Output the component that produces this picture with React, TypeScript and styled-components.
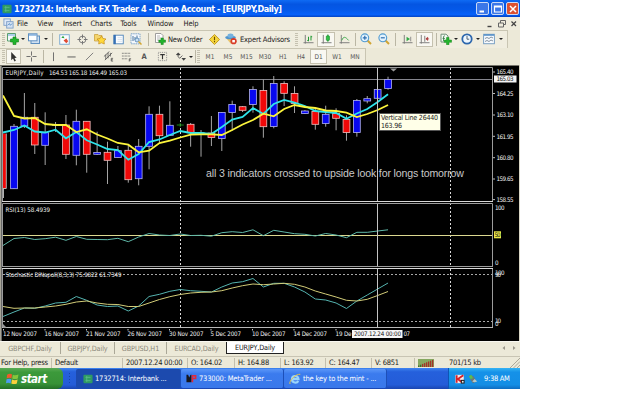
import React from "react";
import styled, { createGlobalStyle } from "styled-components";

type Point = [number, number];

// color, open/close box top, box bottom, wick top, wick bottom
type Candle = ["r" | "b" | "w" | "g", number, number, number, number];

const candles: Candle[] = [
  ["b", 126.3, 188.7, 124, 189],
  ["b", 117.3, 126, 93, 128],
  ["r", 117.3, 145, 103, 154],
  ["b", 132.7, 145.3, 112.3, 165],
  ["w", 125, 125, 122, 132],
  ["r", 125, 154.3, 115, 159],
  ["b", 121.3, 155.3, 109.7, 165.3],
  ["r", 121.3, 154.3, 121, 172.7],
  ["b", 152.5, 154.3, 131.7, 155],
  ["r", 152.3, 160.3, 141.7, 184],
  ["b", 150.7, 157.5, 146, 158],
  ["r", 150.3, 179.7, 144.7, 182.7],
  ["b", 146.3, 178.7, 139, 185.3],
  ["b", 114.3, 146.3, 106.3, 169.3],
  ["r", 114.3, 135.7, 105.7, 144],
  ["b", 125.3, 135.3, 101.3, 136],
  ["g", 125, 125, 123, 127],
  ["r", 124.3, 132.7, 123, 146.7],
  ["w", 133, 133, 130, 156.7],
  ["r", 133, 137.5, 116, 146],
  ["b", 112.5, 138.5, 112, 151],
  ["b", 104.5, 112.5, 100.7, 130.7],
  ["r", 106.7, 110.3, 106, 112],
  ["b", 89.5, 104.5, 86.3, 112.7],
  ["r", 90.5, 126.7, 79.7, 137.7],
  ["b", 83.5, 126.5, 76, 128.3],
  ["r", 83.5, 93.3, 81.3, 106],
  ["r", 93.5, 103.5, 86.3, 113],
  ["b", 111, 113.5, 110, 114],
  ["r", 111.5, 124.3, 109, 129.7],
  ["b", 114.3, 123.5, 105.7, 126.7],
  ["r", 113.5, 118.3, 108.3, 130.3],
  ["r", 119.5, 132.5, 115.3, 140.7],
  ["b", 100.5, 132.5, 99, 136.7],
  ["b", 98.7, 101, 96, 103.3],
  ["b", 89.5, 98.3, 89, 99],
  ["b", 79.5, 88.5, 76.7, 89.7],
];

const candleX = (i: number) => 14 + i * 10.39;
const fills = { r: "#f00808", b: "#0808f0", w: "#fff", g: "#1a8a1a" };

// one value per bar, the first sits on the left border
const series = (values: number[]): Point[] =>
  values.map((y, i) => [i === 0 ? 3 : candleX(i - 1), y]);

const slowAverage = series([
  95.5, 116, 118.5, 118, 124, 125, 125, 132, 129.3, 134.5, 138.5, 143, 144.7, 152.3,
  150.7, 143, 140.7, 137.5, 134.7, 134.3, 134.3, 135, 130, 124.5, 120, 113.7, 116.3,
  109, 105, 107, 108, 110.5, 111, 112.7, 117, 114, 110, 105,
]);
const fastAverage = series([
  132.5, 130, 125.5, 131.5, 132.5, 129.7, 138.3, 132, 140.3, 144.5, 149, 150, 159.7,
  154, 142, 139.5, 135, 131, 133, 133, 134, 127, 119.5, 117, 108, 114, 104, 100,
  102.7, 106, 111, 112, 113, 118.7, 113.5, 109, 102, 94.3,
]);
const rsi = series([
  245.5, 238.5, 237.5, 239.5, 238.7, 237.2, 240.3, 236.5, 239.3, 239.5, 239.7, 238.3,
  241.7, 237, 233.5, 235, 235.5, 234, 235.5, 235.3, 236.2, 232.7, 231.7, 232.5, 229.8,
  235.7, 230.3, 232, 233.7, 234.3, 236, 233.5, 235, 237.7, 232.3, 232.3, 231, 229.8,
]);
const stochMain = series([
  316.5, 312, 308, 308.3, 306, 303, 302.3, 296.5, 300.3, 305, 306.5, 306, 311, 306,
  296.5, 294.3, 291.3, 289.5, 290.7, 291.3, 292, 287, 283, 281.7, 278.5, 287, 283.3,
  283.3, 287, 292, 299, 300, 303, 308.5, 301, 295, 289, 283,
]);
const stochSignal = series([
  306.5, 308.3, 308, 308, 307, 306, 304.3, 302, 301, 303, 304.3, 304.5, 306.5, 306.5,
  303, 299.5, 296.7, 294.5, 293, 292.3, 292, 290.7, 288, 285.7, 284, 284.7, 284,
  283.3, 284.3, 287, 291, 294, 297, 300.3, 301, 299.3, 295.5, 291.5,
]);

const toPoints = (pts: Point[]) => pts.map((p) => p.join(",")).join(" ");

const priceLabels: [string, number][] = [
  ["165.40", 72],
  ["164.25", 93.5],
  ["163.10", 115],
  ["161.95", 136.3],
  ["160.80", 157.7],
  ["159.65", 179],
  ["158.55", 199.6],
];

const dateLabels: [string, number, number][] = [
  ["12 Nov 2007", 3, 34],
  ["16 Nov 2007", 44.5, 34.5],
  ["21 Nov 2007", 86, 34.5],
  ["26 Nov 2007", 127.5, 34.5],
  ["30 Nov 2007", 169, 34.5],
  ["5 Dec 2007", 210.5, 30.5],
  ["10 Dec 2007", 252, 33.5],
  ["14 Dec 2007", 293.5, 33.5],
  ["19 De", 335.5, 16],
];

const tabs: [string, number, boolean][] = [
  ["GBPCHF,Daily", 61, false],
  ["GBPJPY,Daily", 54, false],
  ["GBPUSD,H1", 52, false],
  ["EURCAD,Daily", 59, false],
  ["EURJPY,Daily", 58, true],
];

const statusCells: [string, number][] = [
  ["For Help, press", 52],
  ["Default", 71],
  ["2007.12.24 00:00", 65],
  ["O: 164.02", 47],
  ["H: 164.88", 46],
  ["L: 163.92", 45],
  ["C: 164.47", 46],
  ["V: 6851", 43],
];

const periods: [string, number][] = [
  ["M1", 18],
  ["M5", 18],
  ["M15", 19],
  ["M30", 18],
  ["H1", 18],
  ["H4", 18],
  ["D1", 17],
  ["W1", 20],
  ["MN", 16],
];

const menuItems: [string, number][] = [
  ["File", 20.5],
  ["View", 25.5],
  ["Insert", 27.5],
  ["Charts", 30],
  ["Tools", 27],
  ["Window", 36],
  ["Help", 30],
];

function PriceChart() {
  return (
    <Plot height={136} viewBox="2 66 516 136">
      <line x1="450.5" x2="450.5" y1="68" y2="202" className="dash" />
      <line x1="180.5" x2="180.5" y1="68" y2="202" className="dash" />
      <line x1="3" x2="493" y1="79.5" y2="79.5" stroke="#85858d" />
      <rect x="3" y="133.5" width="3" height="55" fill="#f00808" />
      <path d="M3 188.5H6.3V133.5M3.5 189V198" className="wick" />
      {candles.map(([kind, top, bottom, high, low], i) => {
        const x = candleX(i);
        return (
          <g key={i}>
            <line
              x1={x}
              x2={x}
              y1={high}
              y2={low}
              stroke={kind === "g" ? fills.g : "#b8b8b8"}
              strokeWidth=".9"
            />
            {top === bottom ? (
              <line x1={x - 3.5} x2={x + 3.5} y1={top} y2={top} stroke={fills[kind]} />
            ) : (
              <rect
                x={x - 3.4}
                y={top}
                width="6.8"
                height={bottom - top}
                fill={fills[kind]}
                stroke={kind === "r" ? "#f0c0c0" : "#b4b4f0"}
                strokeWidth=".8"
              />
            )}
          </g>
        );
      })}
      <polyline points={toPoints(fastAverage)} stroke="#2fe3ea" strokeWidth="1.8" fill="none" />
      <polyline points={toPoints(slowAverage)} stroke="#fbf43c" strokeWidth="1.8" fill="none" />
      <line x1="377.5" x2="377.5" y1="68" y2="202" stroke="#c4c4c4" />
      <path d="M390 68.5H397L393.5 71.5Z" fill="#9a9a9a" />
      <path d="M2.5 202V67.5H492.5V202" className="frame" />
      <line x1="2" x2="493" y1="201.5" y2="201.5" stroke="#d8d8d8" />
      <text x="5.5" y="75.3" textLength="38" className="small">EURJPY,Daily</text>
      <text x="49" y="75.3" textLength="78" className="small">164.53 165.18 164.49 165.03</text>
      <text x="206" y="176.6" textLength="258" className="note">
        all 3 indicators crossed to upside look for longs tomorrow
      </text>
      {priceLabels.map(([label, y]) => (
        <g key={label}>
          <line x1="493" x2="495" y1={y} y2={y} stroke="#bbb" />
          <text x="496.5" y={y + 2.4} textLength="17" className="small">{label}</text>
        </g>
      ))}
      <rect x="494" y="75.5" width="22.5" height="7" fill="#f4f4f4" />
      <text x="496.5" y="81.4" textLength="17" className="small inverse">165.03</text>
    </Plot>
  );
}

function RsiChart() {
  return (
    <Plot height={65} viewBox="2 202 516 65">
      <line x1="450.5" x2="450.5" y1="203" y2="267" className="dash" />
      <line x1="180.5" x2="180.5" y1="203" y2="267" className="dash" />
      <line x1="3" x2="493" y1="235.5" y2="235.5" stroke="#dcd890" />
      <polyline points={toPoints(rsi)} stroke="#5fb8a8" strokeWidth="1" fill="none" />
      <line x1="377.5" x2="377.5" y1="203" y2="267" stroke="#c4c4c4" />
      <path d="M2.5 267V203.5H492.5V267" className="frame" />
      <line x1="2" x2="493" y1="266.5" y2="266.5" stroke="#9c9c9c" />
      <text x="5.5" y="211.6" textLength="44.5" className="small">RSI(13) 58.4939</text>
      <text x="495" y="210" textLength="9.5" className="small">100</text>
      <rect x="494" y="231.3" width="7" height="7" fill="#ece84a" />
      <text x="494.5" y="237.2" textLength="6" className="small inverse">50</text>
      <text x="495" y="265" className="small">0</text>
    </Plot>
  );
}

function StochasticChart() {
  return (
    <Plot height={62} viewBox="2 267 516 62">
      <line x1="450.5" x2="450.5" y1="269" y2="328" className="dash" />
      <line x1="180.5" x2="180.5" y1="269" y2="328" className="dash" />
      <line x1="3" x2="493" y1="274.5" y2="274.5" className="level" />
      <line x1="3" x2="493" y1="321.5" y2="321.5" className="level" />
      <polyline points={toPoints(stochMain)} stroke="#55b4b0" strokeWidth="1" fill="none" />
      <polyline points={toPoints(stochSignal)} stroke="#d2cc78" strokeWidth="1" fill="none" />
      <line x1="377.5" x2="377.5" y1="268" y2="328" stroke="#c4c4c4" />
      <path d="M2.5 328V268.5H492.5V328" className="frame" />
      <line x1="2" x2="493" y1="268.5" y2="268.5" stroke="#d8d8d8" />
      <line x1="2" x2="493" y1="327.5" y2="327.5" stroke="#b8b8b8" />
      <path d="M3 324L7 328H3Z" fill="#999" />
      <text x="5.5" y="277" textLength="116" className="small">
        Stochastic DiNapoli(8,3,3) 75.9822 61.7349
      </text>
      <text x="495" y="275.3" textLength="9.5" className="small">100</text>
      <text x="495" y="277" textLength="6" className="small">90</text>
      <text x="495" y="323.4" textLength="6" className="small">10</text>
      <text x="495" y="326" className="small">0</text>
    </Plot>
  );
}

function TimeAxis() {
  return (
    <Plot height={11} viewBox="2 329 516 11">
      {dateLabels.map(([label, x, width]) => (
        <g key={label}>
          <line x1={x + 0.5} x2={x + 0.5} y1="328" y2="330.5" stroke="#ccc" />
          <text x={x} y="336.4" textLength={width} className="small">{label}</text>
        </g>
      ))}
      <rect x="352" y="330" width="50.5" height="8" fill="#f6f6f6" />
      <text x="354" y="336.4" textLength="47" className="small inverse">2007.12.24 00:00</text>
      <text x="403.5" y="336.4" textLength="6.5" className="small">07</text>
    </Plot>
  );
}

const glyphs: Record<string, React.ReactNode> = {
  app: (
    <>
      <rect x=".5" y="1" width="11" height="10" rx="1" fill="#2f9a63" />
      <path d="M3 4H9M3 8H9M4.5 2.5V9.5" stroke="#5cbd88" fill="none" />
    </>
  ),
  charts: (
    <>
      <rect x="1" y="1" width="7" height="7" fill="#dfeaf8" stroke="#7fa0c8" />
      <rect x="4" y="4" width="7" height="7" fill="#d4e2f4" stroke="#7fa0c8" />
      <path d="M5 8L7 6L8 8L10 6" stroke="#5a92c8" fill="none" />
    </>
  ),
  newChart: (
    <>
      <path d="M.5 .5H8.5V8H.5Z" fill="#f4f8fc" stroke="#5aa070" />
      <path d="M1 2H8" stroke="#6aa3d8" />
      <path d="M6 4H9V6H11.5V9H9V11.5H6V9H3.5V6H6Z" fill="#23b52d" stroke="#128218" strokeWidth=".6" />
    </>
  ),
  profiles: (
    <>
      <rect x="3" y="3" width="8.5" height="7.5" fill="#cfe0f2" stroke="#5e8fc0" />
      <rect x=".5" y=".8" width="8.5" height="7" fill="#fdfeff" stroke="#5e8fc0" />
      <path d="M1 2H8.5" stroke="#4b8bd0" />
    </>
  ),
  watch: (
    <>
      <rect x=".8" y=".8" width="10.4" height="10.4" fill="#fafcff" stroke="#76a8cf" />
      <path d="M2.5 4L4.5 2L6 4.5Z" fill="#2aa43a" />
      <path d="M5 7L8 5L10 8L8 10Z" fill="#e04a32" />
    </>
  ),
  crosshair: (
    <>
      <circle cx="6" cy="6" r="3.7" fill="none" stroke="#777" />
      <path d="M6 .5V4.5M6 7.5V11.5M.5 6H4.5M7.5 6H11.5" stroke="#777" strokeWidth="1.1" />
    </>
  ),
  folder: (
    <>
      <path d="M.5 1.5H4L5 2.5H8V8H.5Z" fill="#f4d56e" stroke="#c79b32" strokeWidth=".7" />
      <path d="M7.5 3L9 5.5L12 6L10 8L10.3 11L7.5 9.8L4.7 11L5 8L3 6L6 5.5Z" fill="#ffd83a" stroke="#c48d1c" strokeWidth=".7" />
    </>
  ),
  terminal: (
    <>
      <rect x=".8" y="1.3" width="10.4" height="9.4" fill="#fbfdff" stroke="#5286ba" />
      <path d="M2 1V11" stroke="#3670b4" strokeWidth="2.2" />
      <path d="M5 4H10M5 6H10M5 8H10" stroke="#c2d2e2" strokeWidth=".6" />
    </>
  ),
  tester: (
    <>
      <rect x="1" y=".8" width="9" height="10" fill="#f3f7fc" stroke="#7ca4ca" strokeDasharray="1.5 .7" />
      <path d="M3 3V8M5 4V7M7 2.5V6" stroke="#4b77a0" />
      <circle cx="7" cy="7" r="2" fill="#c7e0f4" stroke="#4b7fae" strokeWidth=".8" />
      <path d="M8.5 8.5L11.5 11.5" stroke="#d3a630" strokeWidth="1.5" />
    </>
  ),
  order: (
    <>
      <path d="M1.5 .5H7L9 2.5V9.5H1.5Z" fill="#fff" stroke="#888" strokeWidth=".8" />
      <path d="M3 3H6M3 5H7M3 7H5" stroke="#999" strokeWidth=".7" />
      <path d="M7 5H9.3V7H11.5V9.3H9.3V11.5H7V9.3H4.8V7H7Z" fill="#22b32c" stroke="#128218" strokeWidth=".5" />
    </>
  ),
  warning: (
    <>
      <path d="M6 .5L11.5 6L6 11.5L.5 6Z" fill="#f5d63c" stroke="#c09518" />
      <path d="M6 3V6.7M6 7.7V9" stroke="#704d00" strokeWidth="1.2" />
    </>
  ),
  expert: (
    <>
      <path d="M1 5L6 11L10 6Z" fill="#e9c36c" />
      <ellipse cx="5.5" cy="4.5" rx="5.3" ry="1.8" fill="#4f94cc" />
      <ellipse cx="5.5" cy="2.7" rx="3" ry="2.1" fill="#74b1df" />
      <circle cx="8.6" cy="8.2" r="3.1" fill="#d83c28" />
      <rect x="7.3" y="7" width="2.6" height="2.4" fill="#fff" />
    </>
  ),
  bars: (
    <>
      <path d="M2.5 1V10.5M.5 9.5H11.5" stroke="#777" />
      <path d="M6 3V8M4.7 7H6M8.7 2V7M8.7 3H10" stroke="#249a35" strokeWidth="1.1" />
    </>
  ),
  candles: (
    <>
      <path d="M2.5 1V10.5M.5 9.5H11.5" stroke="#777" />
      <path d="M7.5 .5V8.5" stroke="#138a25" />
      <rect x="5.8" y="2" width="3.4" height="5" rx=".8" fill="#32c247" stroke="#138a25" strokeWidth=".7" />
    </>
  ),
  curve: (
    <>
      <path d="M2.5 1V10.5M.5 9.5H11.5" stroke="#777" />
      <path d="M3 7C5 2 7 3 10.5 7" stroke="#36a545" fill="none" />
    </>
  ),
  zoomIn: (
    <>
      <path d="M7 7L11 11" stroke="#d1a534" strokeWidth="2" />
      <circle cx="4.8" cy="4.8" r="3.9" fill="#e3f2fd" stroke="#4f9ad1" strokeWidth="1.1" />
      <path d="M4.8 2.8V6.8M2.8 4.8H6.8" stroke="#2f6fb0" strokeWidth="1.2" />
    </>
  ),
  zoomOut: (
    <>
      <path d="M7 7L11 11" stroke="#d1a534" strokeWidth="2" />
      <circle cx="4.8" cy="4.8" r="3.9" fill="#e3f2fd" stroke="#4f9ad1" strokeWidth="1.1" />
      <path d="M2.8 4.8H6.8" stroke="#2f6fb0" strokeWidth="1.2" />
    </>
  ),
  scroll: (
    <>
      <path d="M2.5 1V10.5M.5 9.5H11.5" stroke="#777" />
      <path d="M5 3L8.7 5.5L5 8Z" fill="#2fa843" />
      <path d="M9.5 3V8" stroke="#888" />
    </>
  ),
  shift: (
    <>
      <path d="M2.5 1V10.5M.5 9.5H11.5M6.3 2V8.5" stroke="#777" />
      <path d="M11 5.3H8M9.5 3.5L7.5 5.3L9.5 7Z" fill="#a33" stroke="#a33" strokeWidth=".7" />
    </>
  ),
  indicators: (
    <>
      <path d="M1 1.2H6L8 3V9H1Z" fill="#f4faf4" stroke="#71917a" />
      <path d="M3.5 8V4C3.5 3 4 2.8 5 3M2.5 5.4H5" stroke="#337542" fill="none" strokeWidth=".8" />
      <path d="M6.5 4.5H9V7H11.5V9.3H9V11.7H6.5V9.3H4.2V7H6.5Z" fill="#24b42e" stroke="#158a1c" strokeWidth=".5" />
    </>
  ),
  clock: (
    <>
      <circle cx="6" cy="6" r="4.7" fill="#eef7ff" stroke="#2d67ad" strokeWidth="1.8" />
      <path d="M6 3V6.2H8.2" stroke="#456" fill="none" strokeWidth=".9" />
    </>
  ),
  template: (
    <>
      <rect x=".6" y="1.3" width="10.8" height="9.4" fill="#f8fbff" stroke="#7ba0c4" />
      <path d="M1 2H11" stroke="#4f8dc7" strokeWidth="1.5" />
      <path d="M2 5.5L4 4.5L6 5.5L8 4L10 5M2 8.5L4 7.5L6 8.5L8 7L10 8" stroke="#678" fill="none" strokeWidth=".8" />
    </>
  ),
  cursor: <path d="M3.5 1V10L5.5 8.2L7 11.5L8.6 10.7L7.1 7.6L9.5 7.3Z" fill="#333" />,
  cross: <path d="M6 .5V5M6 7V11.5M.5 6H5M7 6H11.5" stroke="#666" />,
  vline: <path d="M6 1.5V11" stroke="#666" />,
  hline: <path d="M1.5 6.5H10.5" stroke="#555" />,
  trend: <path d="M2 10L10 2" stroke="#777" />,
  channel: (
    <>
      <path d="M1 6L7 .5M2 10L10 2M3 4V9M5.5 2V8M8 2V6" stroke="#555" strokeWidth=".9" />
      <path d="M11 8H9V11H11M9 9.5H10.7" stroke="#444" fill="none" strokeWidth=".8" />
    </>
  ),
  fibo: (
    <>
      <path d="M1 2.5H10.5M1 5.5H10.5M1 8.5H7" stroke="#666" strokeDasharray="1 .6" />
      <path d="M9 11.5V8.5H11M9 10H10.6" stroke="#444" fill="none" strokeWidth=".8" />
    </>
  ),
  label: (
    <>
      <rect x="1.5" y="1.5" width="9" height="9" fill="none" stroke="#888" strokeDasharray="1 1" />
      <path d="M3.5 4H8.5M6 4V9" stroke="#333" strokeWidth="1.2" />
    </>
  ),
  arrows: (
    <>
      <path d="M1 4.2L3.5 1.5L6 4.2L3.5 5.2Z" fill="#444" />
      <path d="M3 5.5L5 8L8 5" stroke="#555" fill="none" />
      <path d="M7 7.5H12L9.5 10.7Z" fill="#444" />
    </>
  ),
  flag: (
    <>
      <path d="M1 2.5Q3.5 1 5.6 2.3L5 6Q3 4.8 .6 6Z" fill="#ef5a2c" />
      <path d="M6.3 2.5Q8.5 3.6 11.5 2.3L10.9 6Q8.2 7 5.7 6Z" fill="#86c53c" />
      <path d="M.5 6.8Q3 5.6 4.9 6.8L4.3 10.5Q2 9.3 0 10.4Z" fill="#4d9cf0" />
      <path d="M5.5 7Q8 8 10.7 7L10 10.6Q7.5 11.6 4.9 10.6Z" fill="#fbd03c" />
    </>
  ),
  explorer: (
    <>
      <path d="M9.3 8C8 10.4 3 10.2 3 6.2C3 2.2 9.5 2 9.5 6.2H4" stroke="#9bd4fb" strokeWidth="2.2" fill="none" />
      <path d="M1 11C-.5 8 7 .5 11.3 1.3" stroke="#e5c345" fill="none" />
    </>
  ),
  meta: (
    <>
      <path d="M.5 10V2H2.3L3.5 5L5 2H6V10" fill="#16161c" />
      <path d="M7 10V3H10.5V6H7" stroke="#e0293a" strokeWidth="1.7" fill="none" />
    </>
  ),
  antivirus: (
    <>
      <rect x=".5" y="1" width="10" height="10" fill="#f5eaea" />
      <path d="M2 1.5V10.5M10 1.5L3.5 6L9 10.5" stroke="#d81f26" strokeWidth="2.2" fill="none" />
      <rect x="7" y="7" width="4.5" height="4.5" fill="#222" />
      <rect x="8.3" y="8.3" width="2" height="2" fill="#eee" />
    </>
  ),
  safelyRemove: (
    <>
      <path d="M2 1L7 3L10 9L6 11L3 7Z" fill="#6d7778" />
      <path d="M1 3L4 1L6 5L3 6Z" fill="#57c14e" />
      <path d="M5 9L8 6L11 9L8 10Z" fill="#b7c7c6" />
    </>
  ),
};

function Icon({ name, size = 12 }: { name: string; size?: number }) {
  return (
    <IconSvg width={size} height={size} viewBox="0 0 12 12">
      {glyphs[name]}
    </IconSvg>
  );
}

function App() {
  return (
    <Desktop>
      <GlobalStyle />
      <Screen>
        <TitleBar>
          <Icon name="app" size={10} />
          <Title>1732714: Interbank FX Trader 4 - Demo Account - [EURJPY,Daily]</Title>
          <WindowButton>
            <svg width="12" height="12"><path d="M2.5 8.5H7" stroke="#fff" strokeWidth="2" /></svg>
          </WindowButton>
          <WindowButton>
            <svg width="12" height="12"><path d="M2.5 3H9.5V9H2.5ZM2.5 4H9.5" stroke="#fff" strokeWidth="1.2" fill="none" /></svg>
          </WindowButton>
          <WindowButton $close>
            <svg width="12" height="12"><path d="M3 3L9 9M9 3L3 9" stroke="#fff" strokeWidth="1.5" /></svg>
          </WindowButton>
        </TitleBar>

        <MenuBar>
          <Icon name="charts" size={11} />
          <MenuList>
            {menuItems.map(([label, width]) => (
              <MenuItem key={label} $w={width}>{label}</MenuItem>
            ))}
          </MenuList>
          <ChildControls>
            <svg width="10" height="10"><path d="M2.5 7.5H6.5" stroke="#444" strokeWidth="1.4" /></svg>
            <svg width="10" height="10"><path d="M3.5 1.5H8.5V5.5H7M1.5 4H6.5V8H1.5ZM3.5 1.5V4" stroke="#666" fill="none" /></svg>
            <svg width="10" height="10"><path d="M2.5 2.5L7 7M7 2.5L2.5 7" stroke="#444" strokeWidth="1.2" /></svg>
          </ChildControls>
        </MenuBar>

        <Toolbar $w={508}>
          <Handle />
          <Tool $w={14}><Icon name="newChart" /></Tool>
          <Tool $w={5}><Caret /></Tool>
          <Tool $w={18}><Icon name="profiles" /></Tool>
          <Tool $w={5}><Caret /></Tool>
          <Divider $w={8} />
          <Tool $w={17}><Icon name="watch" size={11} /></Tool>
          <Tool $w={18}><Icon name="crosshair" size={11} /></Tool>
          <Tool $w={18}><Icon name="folder" /></Tool>
          <Tool $w={18}><Icon name="terminal" size={11} /></Tool>
          <Tool $w={18}><Icon name="tester" /></Tool>
          <Divider $w={7} />
          <Tool $w={16}><Icon name="order" /></Tool>
          <ToolLabel $w={39}>New Order</ToolLabel>
          <Tool $w={14}><Icon name="warning" size={11} /></Tool>
          <Tool $w={19}><Icon name="expert" /></Tool>
          <ToolLabel $w={55}>Expert Advisors</ToolLabel>
          <Handle />
          <Tool $w={18}><Icon name="bars" size={11} /></Tool>
          <Tool $w={18} $pressed><Icon name="candles" size={11} /></Tool>
          <Tool $w={18}><Icon name="curve" size={11} /></Tool>
          <Divider $w={4} />
          <Tool $w={18}><Icon name="zoomIn" /></Tool>
          <Tool $w={18}><Icon name="zoomOut" /></Tool>
          <Divider $w={5} />
          <Tool $w={18}><Icon name="scroll" size={11} /></Tool>
          <Tool $w={17} $pressed><Icon name="shift" size={11} /></Tool>
          <Divider $w={6} />
          <Tool $w={14}><Icon name="indicators" /></Tool>
          <Tool $w={5}><Caret /></Tool>
          <Tool $w={17}><Icon name="clock" /></Tool>
          <Tool $w={5}><Caret /></Tool>
          <Tool $w={18}><Icon name="template" /></Tool>
          <Tool $w={5}><Caret /></Tool>
        </Toolbar>

        <Toolbar $w={366}>
          <Handle />
          <Tool $w={15} $pressed><Icon name="cursor" size={11} /></Tool>
          <Tool $w={20}><Icon name="cross" size={11} /></Tool>
          <Divider $w={4} />
          <Tool $w={17}><Icon name="vline" size={11} /></Tool>
          <Tool $w={18}><Icon name="hline" size={11} /></Tool>
          <Tool $w={19}><Icon name="trend" size={11} /></Tool>
          <Tool $w={18}><Icon name="channel" size={11} /></Tool>
          <Tool $w={18}><Icon name="fibo" size={11} /></Tool>
          <Tool $w={18}><LetterTool>A</LetterTool></Tool>
          <Tool $w={18}><Icon name="label" size={11} /></Tool>
          <Tool $w={18}><Icon name="arrows" size={11} /></Tool>
          <Tool $w={4}><Caret /></Tool>
          <Divider $w={4} />
          <Handle />
          {periods.map(([label, width]) => (
            <Period key={label} $w={width} $pressed={label === "D1"}>{label}</Period>
          ))}
        </Toolbar>

        <ChartWindow>
          <PriceChart />
          <RsiChart />
          <StochasticChart />
          <TimeAxis />
          <Tooltip>
            <span>Vertical Line 26440</span>
            <span>163.96</span>
          </Tooltip>
        </ChartWindow>

        <TabBar>
          {tabs.map(([label, width, active]) => (
            <Tab key={label} $w={width} $active={active}>{label}</Tab>
          ))}
          <TabScroll>
            <svg width="5" height="6"><path d="M4 1V5L1.5 3Z" fill="#99968a" /></svg>
            <svg width="5" height="6"><path d="M1 1V5L3.5 3Z" fill="#99968a" /></svg>
          </TabScroll>
        </TabBar>

        <StatusBar>
          {statusCells.map(([label, width]) => (
            <StatusCell key={label} $w={width}>{label}</StatusCell>
          ))}
          <Signal width="16" height="8">
            <rect width="16" height="8" fill="#86a860" />
            {[0, 1, 2, 3, 4, 5, 6, 7].map((n) => (
              <rect key={n} x={n * 2} y={6.5 - n * 0.8} width="1.3" height="8" fill={n > 1 ? "#a5332a" : "#3f6b2c"} />
            ))}
          </Signal>
          <Traffic>701/15 kb</Traffic>
          <svg width="10" height="10">
            <path d="M0 10L10 0M3.5 10L10 3.5M7 10L10 7" stroke="#aca899" />
          </svg>
        </StatusBar>

        <Taskbar>
          <StartButton>
            <Icon name="flag" size={13} />
            start
          </StartButton>
          <QuickHandle />
          <Task $w={105} $active>
            <Icon name="app" size={10} />
            <TaskText>1732714: Interbank ...</TaskText>
          </Task>
          <Task $w={103}>
            <Icon name="meta" size={11} />
            <TaskText>733000: MetaTrader ...</TaskText>
          </Task>
          <Task $w={103}>
            <Icon name="explorer" size={12} />
            <TaskText>the key to the mint - ...</TaskText>
          </Task>
          <Tray>
            <Icon name="antivirus" size={10} />
            <Icon name="safelyRemove" size={10} />
            <Clock>9:38 AM</Clock>
          </Tray>
        </Taskbar>
      </Screen>
    </Desktop>
  );
}

const GlobalStyle = createGlobalStyle`
  * {
    box-sizing: border-box;
  }
  body {
    margin: 0;
    background: #fff;
    overflow: hidden;
  }
`;

const Desktop = styled.div`
  width: 625px;
  height: 405px;
  background: #fff;
  font-family: "DejaVu Sans Condensed", "DejaVu Sans", sans-serif;
  font-size: 7.5px;
  color: #222;
  white-space: nowrap;
`;

const Screen = styled.div`
  display: flex;
  flex-direction: column;
  width: 520px;
  height: 389px;
  background: #ece9d8;
`;

const IconSvg = styled.svg`
  display: block;
  flex: none;
`;

const TitleBar = styled.header`
  display: flex;
  align-items: center;
  gap: 2px;
  height: 17px;
  padding: 0 1px 0 2px;
  background: linear-gradient(#0f6bf4 0, #0455e2 25%, #0459ea 60%, #0661fa 85%, #0344c4);
`;

const Title = styled.h1`
  flex: 1;
  margin: 0;
  font-size: 9px;
  font-weight: bold;
  letter-spacing: -0.43px;
  color: #fff;
`;

const WindowButton = styled.span<{ $close?: boolean }>`
  display: flex;
  align-items: center;
  justify-content: center;
  width: 13px;
  height: 13px;
  border: 1px solid #c9d9f6;
  border-radius: 2px;
  background: ${(props) => (props.$close ? "#dc5130" : "#3b77e8")};
`;

const MenuBar = styled.nav`
  display: flex;
  align-items: center;
  height: 13px;
  padding: 0 1px 0 3px;
  background: #efecdd;
  letter-spacing: -0.1px;
`;

const MenuList = styled.div`
  display: flex;
  flex: 1;
  margin-left: 3px;
`;

const MenuItem = styled.span<{ $w: number }>`
  width: ${(props) => props.$w}px;
`;

const ChildControls = styled.div`
  display: flex;
  gap: 2px;
  align-items: center;
`;

const Toolbar = styled.div<{ $w: number }>`
  display: flex;
  align-items: center;
  width: ${(props) => props.$w}px;
  height: 17.5px;
  padding-left: 2px;
  border: solid #c9c5b2;
  border-width: 1px 1px 0 0;
  background: #f0eddf;
`;

const Handle = styled.span`
  flex: none;
  width: 3px;
  height: 13px;
  margin-right: 1px;
  background: repeating-linear-gradient(#c5c1b0 0 1px, #efecdd 1px 2px);
`;

const Tool = styled.span<{ $w: number; $pressed?: boolean }>`
  display: flex;
  flex: none;
  align-items: center;
  justify-content: center;
  width: ${(props) => props.$w}px;
  height: 15px;
  background: ${(props) => (props.$pressed ? "#f9f8f2" : "none")};
  box-shadow: ${(props) => (props.$pressed ? "inset 0 0 0 1px #c5c1af" : "none")};
`;

const Caret = styled.i`
  border: 2px solid transparent;
  border-top-color: #222;
  border-bottom: 0;
`;

const Divider = styled.span<{ $w: number }>`
  flex: none;
  width: ${(props) => props.$w}px;
  height: 13px;
  background: linear-gradient(#bab6a4, #bab6a4) center / 1px 100% no-repeat;
`;

const ToolLabel = styled.span<{ $w: number }>`
  flex: none;
  width: ${(props) => props.$w}px;
  letter-spacing: -0.2px;
`;

const LetterTool = styled.b`
  font-size: 7.5px;
  color: #555;
`;

const Period = styled(Tool)`
  font-size: 6.5px;
  color: #555;
`;

const ChartWindow = styled.main`
  position: relative;
  display: flex;
  flex-direction: column;
  height: 276px;
  padding: 1px 0 1px 2px;
  border-right: 1px solid #d8d5c5;
  background: linear-gradient(90deg, #a8a598 0 1px, #686868 1px 2px, #000 2px);
  box-shadow: inset 0 1px #77756c;
`;

const Plot = styled.svg.attrs({ width: 516 })`
  display: block;
  flex: none;
  font-family: "DejaVu Sans Condensed", "DejaVu Sans", sans-serif;

  .dash {
    stroke: #d8d8d8;
    stroke-dasharray: 2 2;
  }
  .level {
    stroke: #a8a8a8;
    stroke-dasharray: 2 2;
  }
  .frame {
    fill: none;
    stroke: #9c9c9c;
  }
  .wick {
    fill: none;
    stroke: #ddd;
    stroke-width: 0.8;
  }
  .small {
    font-size: 6.2px;
    fill: #f0f0f0;
  }
  .inverse {
    fill: #111;
  }
  .note {
    font-family: "Liberation Sans", Arial, sans-serif;
    font-size: 10.6px;
    fill: #c8c8c8;
  }
`;

const Tooltip = styled.div`
  position: absolute;
  left: 379px;
  top: 48px;
  display: flex;
  flex-direction: column;
  justify-content: center;
  width: 62px;
  height: 18px;
  padding-left: 1px;
  border: 1px solid #555;
  background: #ffffe8;
  font-size: 7px;
  line-height: 8px;
  letter-spacing: -0.2px;
`;

const TabBar = styled.div`
  display: flex;
  align-items: flex-start;
  height: 15px;
  border-top: 1px solid #f8f7f0;
`;

const Tab = styled.span<{ $w: number; $active: boolean }>`
  display: flex;
  align-items: center;
  justify-content: center;
  width: ${(props) => props.$w}px;
  height: 12px;
  border: solid ${(props) => (props.$active ? "#222" : "#aaa797")};
  border-width: ${(props) => (props.$active ? "0 1px 1px" : "0 1px 0 0")};
  background: ${(props) => (props.$active ? "#fff" : "none")};
  color: ${(props) => (props.$active ? "#111" : "#8b887a")};
  font-size: 7.2px;
  letter-spacing: -0.1px;

  &:nth-child(4) {
    border-right: 0;
  }
`;

const TabScroll = styled.div`
  display: flex;
  gap: 6px;
  margin: 3px 3px 0 auto;
`;

const StatusBar = styled.footer`
  display: flex;
  align-items: center;
  height: 12px;
  border-top: 1px solid #c8c4b3;
  letter-spacing: -0.24px;
`;

const StatusCell = styled.span<{ $w: number }>`
  flex: none;
  width: ${(props) => props.$w}px;
  height: 10px;
  padding-left: 3px;
  line-height: 10px;
  border-right: 1px solid #c3bfae;

  &:first-child {
    padding-left: 1px;
  }
`;

const Signal = styled.svg`
  margin-left: 3px;
`;

const Traffic = styled.span`
  flex: 1;
  padding-left: 15px;
`;

const Taskbar = styled.div`
  display: flex;
  height: 21px;
  background: linear-gradient(#3f85f0, #2560dc 18%, #245cd8 80%, #1a45b0);
`;

const StartButton = styled.div`
  display: flex;
  align-items: center;
  gap: 2px;
  width: 63px;
  padding-left: 6px;
  border-radius: 0 6px 6px 0;
  background: linear-gradient(#5aab55, #3c9a3b 20%, #379237 75%, #236f27);
  font-size: 11.5px;
  font-style: italic;
  font-weight: bold;
  letter-spacing: -0.5px;
  color: #fff;
`;

const QuickHandle = styled.span`
  width: 4px;
  margin: 4px 4px 4px 5px;
  background: radial-gradient(circle, #1744a8 0.8px, transparent 1px) 0 0 / 3px 3px;
`;

const Task = styled.div<{ $w: number; $active?: boolean }>`
  display: flex;
  align-items: center;
  gap: 2px;
  width: ${(props) => props.$w}px;
  height: 19px;
  margin-top: 1px;
  padding-left: ${(props) => (props.$active ? "7px" : "5px")};
  border-right: 1px solid #1d4fb8;
  border-radius: 2px;
  background: ${(props) => (props.$active ? "#1c4aae" : "linear-gradient(#5a96f8, #3b7bee 25%, #3a78ea)")};
`;

const TaskText = styled.span`
  color: #fff;
  letter-spacing: -0.18px;
`;

const Tray = styled.div`
  display: flex;
  align-items: center;
  gap: 3px;
  width: 72px;
  margin-left: auto;
  padding-left: 6px;
  border-left: 1px solid #0d55b5;
  background: linear-gradient(#35b4f4, #1591e8 20%, #148ee5 80%, #0f6cc0);
`;

const Clock = styled.span`
  margin-left: 3px;
  color: #fff;
  letter-spacing: -0.3px;
`;

export default App;
